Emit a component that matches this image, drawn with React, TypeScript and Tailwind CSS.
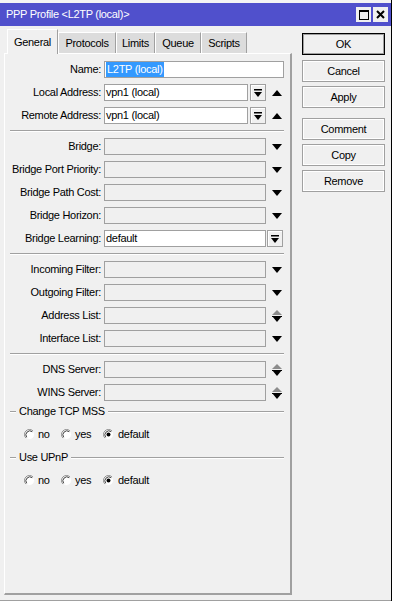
import React from 'react';

const font = { fontFamily: '"Liberation Sans", Arial, sans-serif' };

function DownTri({ gray = false }: { gray?: boolean }) {
  return (
    <svg width="10" height="6" viewBox="0 0 10 6" className="block">
      <polygon points="0,0 10,0 5,6" fill={gray ? '#8c8c8c' : '#000'} />
    </svg>
  );
}

function UpTri() {
  return (
    <svg width="10" height="6" viewBox="0 0 10 6" className="block">
      <polygon points="0,6 10,6 5,0" fill="#000" />
    </svg>
  );
}

function UpDown() {
  return (
    <svg width="10" height="12" viewBox="0 0 10 12" className="block">
      <polygon points="0,5 10,5 5,0" fill="#8c8c8c" />
      <rect x="0" y="6" width="10" height="1" fill="#000" />
      <polygon points="0,6 10,6 5,12" fill="#000" />
    </svg>
  );
}

function DropBox() {
  return (
    <div className="w-[16px] h-[17px] border border-[#a0a0a0] bg-[#f0f0f0] flex items-center justify-center shadow-[inset_1px_1px_0_#fff]">
      <svg width="8" height="8" viewBox="0 0 8 8" className="block">
        <rect x="0" y="0" width="8" height="1.5" fill="#000" />
        <polygon points="0,3 8,3 4,8" fill="#000" />
      </svg>
    </div>
  );
}

type RowProps = {
  label: string;
  value?: React.ReactNode;
  white?: boolean;
  inputW: string;
  children?: React.ReactNode;
};

function Row({ label, value, white, inputW, children }: RowProps) {
  return (
    <div className="h-[23px] flex items-center">
      <div className="w-[96px] shrink-0 text-right text-[11px] leading-[15px] text-black whitespace-nowrap">{label}</div>
      <div
        className={`${inputW} ml-[3px] h-[17px] border border-[#a0a0a0] flex items-center px-[1px] text-[11px] leading-[15px] ${
          white ? 'bg-white' : 'bg-[#f0f0f0]'
        }`}
      >
        {value}
      </div>
      {children}
    </div>
  );
}

function Sep() {
  return (
    <div className="h-[8px] flex flex-col justify-center ml-[5px] mr-[6px]">
      <div className="h-[1px] bg-[#a0a0a0]" />
      <div className="h-[1px] bg-white" />
    </div>
  );
}

function Radio({ checked }: { checked?: boolean }) {
  return (
    <svg width="11" height="11" viewBox="0 0 11 11" className="block">
      <circle cx="5.5" cy="5.5" r="5" fill="#fff" />
      <path d="M1.96 9.04 A5 5 0 0 1 9.04 1.96" fill="none" stroke="#8a8a8a" strokeWidth="1" />
      <path d="M2.7 8.3 A4 4 0 0 1 8.3 2.7" fill="none" stroke="#404040" strokeWidth="1" />
      <path d="M9.04 1.96 A5 5 0 0 1 1.96 9.04" fill="none" stroke="#f0f0f0" strokeWidth="1" />
      {checked && <circle cx="5.5" cy="5.5" r="2" fill="#000" />}
    </svg>
  );
}

function Group({ title }: { title: string }) {
  return (
    <>
      <div className="h-[23px] flex items-center ml-[5px] mr-[6px] text-[11px] leading-[15px]">
        <div className="w-[6px] flex flex-col">
          <div className="h-[1px] bg-[#a0a0a0]" />
          <div className="h-[1px] bg-white" />
        </div>
        <span className="px-[3px] whitespace-nowrap">{title}</span>
        <div className="flex-1 flex flex-col">
          <div className="h-[1px] bg-[#a0a0a0]" />
          <div className="h-[1px] bg-white" />
        </div>
      </div>
      <div className="h-[23px] flex items-center pl-[19px] text-[11px] leading-[15px]">
        <Radio />
        <span className="ml-[3px] w-[23px]">no</span>
        <Radio />
        <span className="ml-[3px] w-[28px]">yes</span>
        <Radio checked />
        <span className="ml-[4px]">default</span>
      </div>
    </>
  );
}

function Btn({ label, primary }: { label: string; primary?: boolean }) {
  return (
    <div
      className={`w-[83px] h-[22px] flex items-center justify-center text-[11px] leading-[15px] bg-[#f0f0f0] border ${
        primary ? 'border-black shadow-[inset_0_0_0_1px_#a0a0a0]' : 'border-[#a0a0a0] shadow-[inset_0_0_0_1px_#fff]'
      }`}
    >
      {label}
    </div>
  );
}

export default function App() {
  const tabs = [
    { name: 'Protocols', w: 'w-[58px]' },
    { name: 'Limits', w: 'w-[39px]' },
    { name: 'Queue', w: 'w-[46px]' },
    { name: 'Scripts', w: 'w-[46px]' },
  ];

  return (
    <div className="w-[395px] h-[601px] bg-white overflow-hidden tracking-[-0.3px]" style={font}>
      <div className="w-[392px] h-[601px] bg-[#f0f0f0] border-r border-black flex flex-col">
        {/* Title bar */}
        <div className="h-[3px] bg-[#f4f4f4]" />
        <div className="h-[23px] bg-[#5050cc] flex items-center pl-[6px] pr-[3px]">
          <span className="text-white text-[11px] leading-[15px] flex-1">PPP Profile &lt;L2TP (local)&gt;</span>
          <div className="w-[15px] h-[15px] bg-[#f0f0f0] flex items-center justify-center">
            <div className="w-[10px] h-[10px] border border-black border-t-2" />
          </div>
          <div className="w-[15px] h-[15px] bg-[#f0f0f0] ml-[2px] flex items-center justify-center">
            <svg width="9" height="9" viewBox="0 0 9 9" className="block">
              <path d="M1 1 L8 8 M8 1 L1 8" stroke="#000" strokeWidth="2" />
            </svg>
          </div>
        </div>

        <div className="flex flex-1">
          {/* Left: tabs + panel */}
          <div className="ml-[4px] w-[288px] flex flex-col">
            <div className="h-[27px] flex items-end pl-[3px]">
              <div className="w-[51px] h-[25px] bg-[#f0f0f0] border-t border-l border-white border-r border-r-[#a0a0a0] flex items-center justify-center text-[11px] leading-[15px] -mb-[1px] relative z-10">
                General
              </div>
              {tabs.map((t) => (
                <div
                  key={t.name}
                  className={`${t.w} h-[21px] bg-[#dcdcdc] border-t border-l border-white border-r border-r-[#a0a0a0] flex items-center justify-center text-[11px] leading-[15px]`}
                >
                  {t.name}
                </div>
              ))}
            </div>
            <div className="h-[542px] border-t border-l border-white border-r-2 border-b-2 border-r-[#a0a0a0] border-b-[#a0a0a0] pt-[4px]">
              <Row
                label="Name:"
                white
                inputW="w-[180px]"
                value={<span className="bg-[#3399ff] text-white px-[1px]">L2TP (local)</span>}
              />
              <Row label="Local Address:" white inputW="w-[144px]" value="vpn1 (local)">
                <div className="ml-[2px]">
                  <DropBox />
                </div>
                <div className="ml-[6px]">
                  <UpTri />
                </div>
              </Row>
              <Row label="Remote Address:" white inputW="w-[144px]" value="vpn1 (local)">
                <div className="ml-[2px]">
                  <DropBox />
                </div>
                <div className="ml-[6px]">
                  <UpTri />
                </div>
              </Row>
              <Sep />
              {['Bridge:', 'Bridge Port Priority:', 'Bridge Path Cost:', 'Bridge Horizon:'].map((l) => (
                <Row key={l} label={l} inputW="w-[162px]">
                  <div className="ml-[6px]">
                    <DownTri />
                  </div>
                </Row>
              ))}
              <Row label="Bridge Learning:" white inputW="w-[162px]" value="default">
                <div className="ml-[1px]">
                  <DropBox />
                </div>
              </Row>
              <Sep />
              <Row label="Incoming Filter:" inputW="w-[162px]">
                <div className="ml-[6px]">
                  <DownTri />
                </div>
              </Row>
              <Row label="Outgoing Filter:" inputW="w-[162px]">
                <div className="ml-[6px]">
                  <DownTri />
                </div>
              </Row>
              <Row label="Address List:" inputW="w-[162px]">
                <div className="ml-[6px]">
                  <UpDown />
                </div>
              </Row>
              <Row label="Interface List:" inputW="w-[162px]">
                <div className="ml-[6px]">
                  <DownTri />
                </div>
              </Row>
              <Sep />
              <Row label="DNS Server:" inputW="w-[162px]">
                <div className="ml-[6px]">
                  <UpDown />
                </div>
              </Row>
              <Row label="WINS Server:" inputW="w-[162px]">
                <div className="ml-[6px]">
                  <UpDown />
                </div>
              </Row>
              <div className="-mt-[4px]">
                <Group title="Change TCP MSS" />
                <Group title="Use UPnP" />
              </div>
            </div>
          </div>

          {/* Right: buttons */}
          <div className="ml-[10px] mt-[7px] flex flex-col">
            <Btn label="OK" primary />
            <div className="mt-[5px]">
              <Btn label="Cancel" />
            </div>
            <div className="mt-[4px]">
              <Btn label="Apply" />
            </div>
            <div className="mt-[10px]">
              <Btn label="Comment" />
            </div>
            <div className="mt-[4px]">
              <Btn label="Copy" />
            </div>
            <div className="mt-[4px]">
              <Btn label="Remove" />
            </div>
          </div>
        </div>
        <div className="h-[1px] bg-[#a0a0a0]" />
      </div>
    </div>
  );
}
